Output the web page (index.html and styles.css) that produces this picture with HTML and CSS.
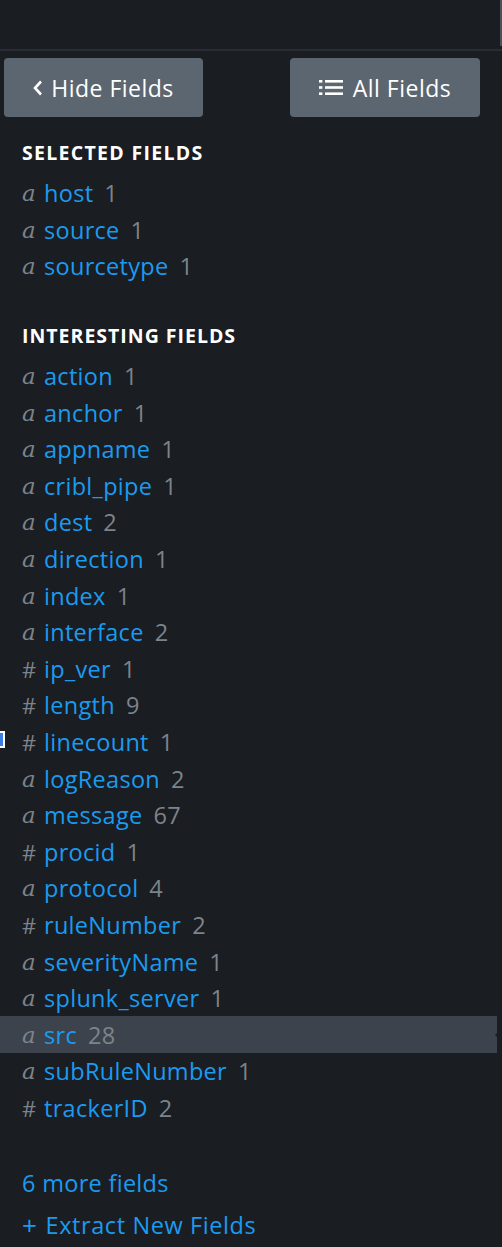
FILE: index.html
```html
<!DOCTYPE html>
<html>
<head>
<meta charset="utf-8">
<link rel="stylesheet" href="styles.css">
</head>
<body>
<div class="panel">
  <div class="topbar"></div>
  <div class="toolbar">
    <button class="btn btn-hide"><svg class="chev" width="10" height="16" viewBox="0 0 10 16"><path d="M8 1.5 L2 8 L8 14.5" fill="none" stroke="#fff" stroke-width="2.6"/></svg>Hide Fields</button>
    <button class="btn btn-all">
      <svg class="list-ico" width="24" height="17" viewBox="0 0 24 17"><rect x="0" y="1" width="3.4" height="2.6" fill="#fff"/><rect x="6" y="1" width="18" height="2.6" fill="#fff"/><rect x="0" y="7.2" width="3.4" height="2.6" fill="#fff"/><rect x="6" y="7.2" width="18" height="2.6" fill="#fff"/><rect x="0" y="13.4" width="3.4" height="2.6" fill="#fff"/><rect x="6" y="13.4" width="18" height="2.6" fill="#fff"/></svg>All Fields</button>
  </div>

  <div class="section-title first">Selected Fields</div>
  <ul class="fields">
    <li><i class="t">a</i><span class="n">host</span><span class="c">1</span></li>
    <li><i class="t">a</i><span class="n">source</span><span class="c">1</span></li>
    <li><i class="t">a</i><span class="n">sourcetype</span><span class="c">1</span></li>
  </ul>

  <div class="section-title second">Interesting Fields</div>
  <ul class="fields">
    <li><i class="t">a</i><span class="n">action</span><span class="c">1</span></li>
    <li><i class="t">a</i><span class="n">anchor</span><span class="c">1</span></li>
    <li><i class="t">a</i><span class="n">appname</span><span class="c">1</span></li>
    <li><i class="t">a</i><span class="n">cribl_pipe</span><span class="c">1</span></li>
    <li><i class="t">a</i><span class="n">dest</span><span class="c">2</span></li>
    <li><i class="t">a</i><span class="n">direction</span><span class="c">1</span></li>
    <li><i class="t">a</i><span class="n">index</span><span class="c">1</span></li>
    <li><i class="t">a</i><span class="n">interface</span><span class="c">2</span></li>
    <li><span class="h">#</span><span class="n">ip_ver</span><span class="c">1</span></li>
    <li><span class="h">#</span><span class="n">length</span><span class="c">9</span></li>
    <li><span class="h">#</span><span class="n">linecount</span><span class="c">1</span><span class="focus"></span></li>
    <li><i class="t">a</i><span class="n">logReason</span><span class="c">2</span></li>
    <li><i class="t">a</i><span class="n">message</span><span class="c">67</span></li>
    <li><span class="h">#</span><span class="n">procid</span><span class="c">1</span></li>
    <li><i class="t">a</i><span class="n">protocol</span><span class="c">4</span></li>
    <li><span class="h">#</span><span class="n">ruleNumber</span><span class="c">2</span></li>
    <li><i class="t">a</i><span class="n">severityName</span><span class="c">1</span></li>
    <li><i class="t">a</i><span class="n">splunk_server</span><span class="c">1</span></li>
    <li class="active"><i class="t">a</i><span class="n">src</span><span class="c">28</span><span class="notch"></span></li>
    <li><i class="t">a</i><span class="n">subRuleNumber</span><span class="c">1</span></li>
    <li><span class="h">#</span><span class="n">trackerID</span><span class="c">2</span></li>
  </ul>

  <a class="link more">6 more fields</a>
  <a class="link extract"><span class="plus">+</span>Extract New Fields</a>
</div>
</body>
</html>
```

FILE: styles.css
```css
html, body {
  margin: 0;
  padding: 0;
  background: #1a1d21;
}
body {
  font-family: "Open Sans", "Liberation Sans", sans-serif;
  color: #fff;
  width: 502px;
  height: 1247px;
  overflow: hidden;
}
.panel {
  position: relative;
  width: 502px;
  height: 1247px;
}
.panel::after {
  content: "";
  position: absolute;
  right: 0;
  top: 0;
  width: 2px;
  height: 46px;
  background: #4a5058;
}
.topbar {
  height: 49px;
  border-bottom: 2px solid #2a2e34;
}
.toolbar {
  display: flex;
  justify-content: space-between;
  padding: 7px 22px 0 4px;
}
.btn {
  display: flex;
  align-items: center;
  justify-content: center;
  background: #5c6670;
  color: #fff;
  border: none;
  border-radius: 4px;
  font-family: inherit;
  font-size: 23px;
  font-weight: 500;
  letter-spacing: 0.5px;
  height: 59px;
  padding: 0;
}
.btn-hide { width: 199px; }
.btn-all { width: 190px; }
.chev {
  margin-right: 8px;
}
.list-ico { margin-right: 10px; }
.section-title {
  font-weight: 700;
  font-size: 19.5px;
  text-transform: uppercase;
  height: 30px;
  line-height: 30px;
  padding-left: 22px;
  letter-spacing: 1px;
  margin-bottom: 7px;
}
.section-title.first { margin-top: 21px; letter-spacing: 1.3px; }
.section-title.second { margin-top: 36px; }
.fields {
  list-style: none;
  margin: 0;
  padding: 0;
}
.fields li {
  position: relative;
  display: flex;
  align-items: center;
  height: 36.6px;
  padding-left: 22px;
  font-size: 23.5px;
  font-weight: 500;
  letter-spacing: 0.3px;
  margin-right: 5px;
}
.fields li.active {
  background: #3c434c;
}
.t {
  font-family: "DejaVu Serif", "Liberation Serif", serif;
  font-style: italic;
  font-weight: 400;
  color: #7d838b;
  font-size: 23px;
  width: 22px;
  letter-spacing: 0;
}
.h {
  color: #7d838b;
  font-size: 22px;
  width: 22px;
  letter-spacing: 0;
}
.n {
  color: #1a9bf0;
}
.c {
  color: #7d838b;
  margin-left: 11px;
}
.notch {
  position: absolute;
  right: -5px;
  top: 50%;
  margin-top: -7px;
  width: 0;
  height: 0;
  border-top: 7px solid transparent;
  border-bottom: 7px solid transparent;
  border-right: 7px solid #1a1d21;
}
.focus {
  position: absolute;
  left: 0;
  top: 7px;
  width: 3px;
  height: 13px;
  background: #3a7de6;
  border: 2px solid #fff;
  border-left: none;
}
.link {
  display: flex;
  align-items: center;
  height: 36.6px;
  padding-left: 22px;
  font-size: 23.5px;
  font-weight: 500;
  letter-spacing: 0.3px;
  color: #1a9bf0;
}
.more { margin-top: 38px; }
.extract { margin-top: 6px; letter-spacing: 0.6px; }
.plus { margin-right: 8px; font-size: 26px; }
```
